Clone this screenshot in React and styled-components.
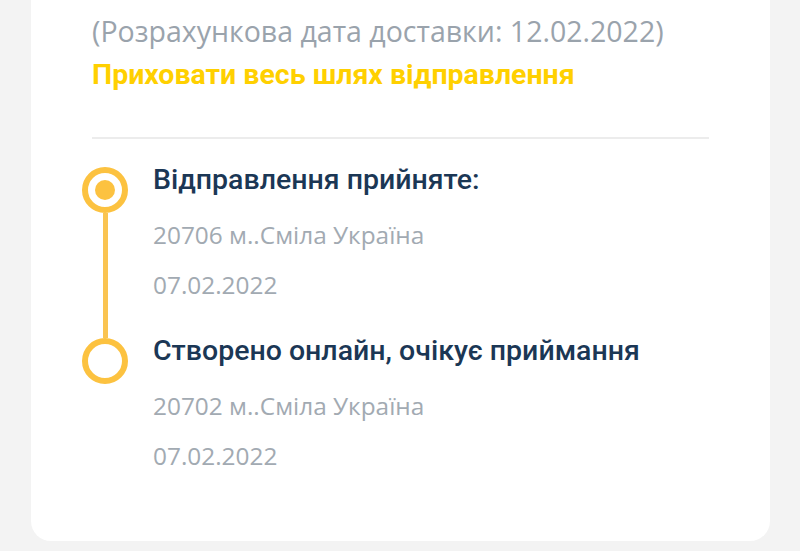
import styled, { createGlobalStyle } from "styled-components";

const GlobalStyle = createGlobalStyle`
  body {
    margin: 0;
    background: #f3f3f3;
  }
`;

const events = [
  {
    title: "Відправлення прийняте:",
    place: "20706 м..Сміла Україна",
    date: "07.02.2022",
    active: true,
  },
  {
    title: "Створено онлайн, очікує приймання",
    place: "20702 м..Сміла Україна",
    date: "07.02.2022",
  },
];

const App = () => {
  return (
    <Page>
      <GlobalStyle />
      <Card>
        <Estimate>(Розрахункова дата доставки: 12.02.2022)</Estimate>
        <HideLink>Приховати весь шлях відправлення</HideLink>
        <Divider />
        <Timeline>
          {events.map((ev, i) => (
            <Item key={i}>
              <Marker>
                <Dot $active={ev.active} />
                {i < events.length - 1 && <Line />}
              </Marker>
              <Info $last={i === events.length - 1}>
                <Title>{ev.title}</Title>
                <Meta>{ev.place}</Meta>
                <Meta>{ev.date}</Meta>
              </Info>
            </Item>
          ))}
        </Timeline>
      </Card>
    </Page>
  );
};

const Page = styled.div`
  min-height: 551px;
`;

const Card = styled.div`
  margin: 0 30px 0 31px;
  padding: 12px 61px 60px;
  background: #ffffff;
  border-radius: 0 0 20px 20px;
`;

const Estimate = styled.div`
  font-family: "Open Sans", sans-serif;
  font-size: 28.5px;
  line-height: 38px;
  color: #9aa3ac;
  white-space: nowrap;
`;

const HideLink = styled.a`
  display: block;
  margin-top: 8px;
  font-family: Roboto, sans-serif;
  font-weight: 700;
  font-size: 28.5px;
  line-height: 34px;
  color: #ffd000;
  white-space: nowrap;
  cursor: pointer;
`;

const Divider = styled.hr`
  margin: 45px 0 28px;
  border: none;
  height: 2px;
  background: #ececec;
`;

const Timeline = styled.div`
  margin-left: -10px;
`;

const Item = styled.div`
  display: grid;
  grid-template-columns: 46px 1fr;
  column-gap: 25px;
`;

const Marker = styled.div`
  display: flex;
  flex-direction: column;
  align-items: center;
`;

const Dot = styled.div`
  box-sizing: border-box;
  width: 46px;
  height: 46px;
  flex: none;
  border-radius: 50%;
  border: 6px solid #fcc240;
  display: flex;
  align-items: center;
  justify-content: center;

  &::after {
    content: "";
    display: ${(p) => (p.$active ? "block" : "none")};
    width: 20px;
    height: 20px;
    border-radius: 50%;
    background: #fcc240;
  }
`;

const Line = styled.div`
  flex: 1;
  width: 5px;
  background: #fac451;
`;

const Info = styled.div`
  padding-bottom: ${(p) => (p.$last ? "0" : "28.5px")};
`;

const Title = styled.div`
  margin-top: -4px;
  margin-bottom: 12.5px;
  font-family: Roboto, sans-serif;
  font-weight: 500;
  font-size: 28.5px;
  line-height: 34px;
  color: #1b3755;
  white-space: nowrap;
`;

const Meta = styled.div`
  font-family: "Open Sans", sans-serif;
  font-size: 24.4px;
  line-height: 50px;
  color: #a2aab2;
`;

export default App;
